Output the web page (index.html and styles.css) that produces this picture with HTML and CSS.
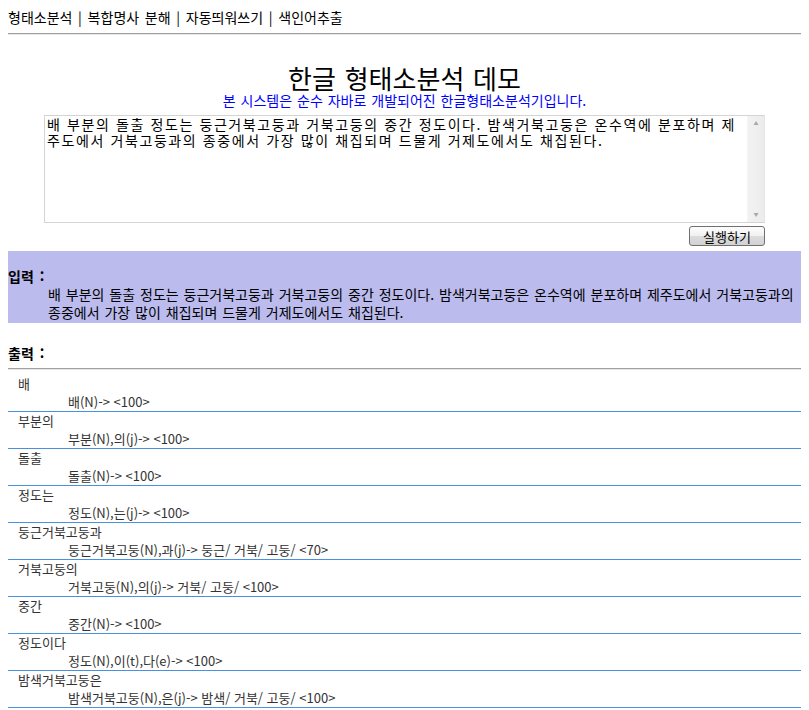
FILE: index.html
```html
<!DOCTYPE html>
<html lang="ko">
<head>
<meta charset="utf-8">
<title>한글 형태소분석 데모</title>
<link rel="stylesheet" href="styles.css">
</head>
<body>
<nav class="topnav">형태소분석 | 복합명사 분해 | 자동띄워쓰기 | 색인어추출</nav>
<hr class="rule">
<header class="head">
  <h1 class="title">한글 형태소분석 데모</h1>
  <p class="subtitle">본 시스템은 순수 자바로 개발되어진 한글형태소분석기입니다.</p>
</header>
<form class="form">
  <div class="editor">
    <textarea class="editor-text">배 부분의 돌출 정도는 둥근거북고둥과 거북고둥의 중간 정도이다. 밤색거북고둥은 온수역에 분포하며 제주도에서 거북고둥과의 종중에서 가장 많이 채집되며 드물게 거제도에서도 채집된다.</textarea>
    <div class="scrollbar"><span class="arrow">&#9650;</span><span class="arrow">&#9660;</span></div>
  </div>
  <div class="actions"><button type="button" class="run">실행하기</button></div>
</form>
<section class="input-box">
  <div class="label">입력 :</div>
  <p class="input-text">배 부분의 돌출 정도는 둥근거북고둥과 거북고둥의 중간 정도이다. 밤색거북고둥은 온수역에 분포하며 제주도에서 거북고둥과의 종중에서 가장 많이 채집되며 드물게 거제도에서도 채집된다.</p>
</section>
<section class="output">
  <div class="label">출력 :</div>
  <hr class="rule out-rule">
  <ul class="results">
    <li class="row"><div class="word">배</div><div class="analysis">배(N)-&gt; &lt;100&gt;</div></li>
    <li class="row"><div class="word">부분의</div><div class="analysis">부분(N),의(j)-&gt; &lt;100&gt;</div></li>
    <li class="row"><div class="word">돌출</div><div class="analysis">돌출(N)-&gt; &lt;100&gt;</div></li>
    <li class="row"><div class="word">정도는</div><div class="analysis">정도(N),는(j)-&gt; &lt;100&gt;</div></li>
    <li class="row"><div class="word">둥근거북고둥과</div><div class="analysis">둥근거북고둥(N),과(j)-&gt; 둥근/ 거북/ 고둥/ &lt;70&gt;</div></li>
    <li class="row"><div class="word">거북고둥의</div><div class="analysis">거북고둥(N),의(j)-&gt; 거북/ 고둥/ &lt;100&gt;</div></li>
    <li class="row"><div class="word">중간</div><div class="analysis">중간(N)-&gt; &lt;100&gt;</div></li>
    <li class="row"><div class="word">정도이다</div><div class="analysis">정도(N),이(t),다(e)-&gt; &lt;100&gt;</div></li>
    <li class="row"><div class="word">밤색거북고둥은</div><div class="analysis">밤색거북고둥(N),은(j)-&gt; 밤색/ 거북/ 고둥/ &lt;100&gt;</div></li>
  </ul>
</section>
</body>
</html>
```
FILE: styles.css
```css
html, body {
  background: #ffffff;
}
body {
  margin: 8px;
  font-family: "Noto Sans CJK KR", "Noto Sans", sans-serif;
  font-size: 14px;
  line-height: 18px;
  color: #000;
}
.topnav {
  height: 18px;
  line-height: 18px;
  word-spacing: 1.8px;
}
.rule {
  margin: 7px 0 0;
  height: 0;
  border: 0;
  border-top: 1px solid #a0a0a0;
  border-bottom: 1px solid #e6e6e6;
}
.head {
  text-align: center;
  margin-top: 29px;
}
.title {
  margin: 0;
  font-size: 26px;
  font-weight: normal;
  line-height: 28px;
  word-spacing: 1.5px;
}
.subtitle {
  margin: 0;
  color: #0000ff;
  font-size: 14px;
  line-height: 16px;
  word-spacing: 1px;
}
.form {
  width: 721px;
  margin: 7px auto 0;
}
.editor {
  display: flex;
  height: 108px;
  box-sizing: border-box;
  border: 1px solid #d4d4d4;
  border-right-color: #e4e4e4;
}
.editor-text {
  flex: 1;
  min-width: 0;
  border: 0;
  outline: none;
  resize: none;
  margin: 0;
  padding: 0 11px 0 2px;
  font-family: "Noto Sans CJK KR", "Noto Sans", sans-serif;
  font-size: 14px;
  line-height: 16px;
  letter-spacing: 1.6px;
  color: #000;
  background: #fff;
  overflow: hidden;
}
.scrollbar {
  width: 17px;
  flex: none;
  display: flex;
  flex-direction: column;
  justify-content: space-between;
  align-items: center;
  padding: 4px 0 5px;
  box-sizing: border-box;
  background: linear-gradient(to right, #f2f2f2, #ececec);
  border-left: 1px solid #f6f6f6;
}
.arrow {
  font-size: 5px;
  line-height: 6px;
  color: #a8a8a8;
}
.actions {
  display: flex;
  justify-content: flex-end;
  margin-top: 3px;
}
.run {
  width: 76px;
  height: 20px;
  box-sizing: border-box;
  padding: 0;
  margin: 0;
  border: 1px solid #707070;
  border-radius: 3px;
  background: linear-gradient(#fdfdfd, #f0f0f0 50%, #dcdcdc 51%, #d2d2d2);
  font-family: "Noto Sans CJK KR", "Noto Sans", sans-serif;
  font-size: 13px;
  line-height: 17px;
  color: #000;
}
.input-box {
  margin: 5px -1px 0 -1px;
  padding: 16px 0 2px;
  background: #bbbbee;
}
.label {
  font-weight: bold;
  line-height: 18px;
  word-spacing: 2px;
}
.input-box .label {
  padding-left: 1px;
}
.input-text {
  margin: 0;
  padding-left: 41px;
  padding-right: 4px;
  line-height: 18px;
  word-spacing: 1px;
  word-break: keep-all;
}
.output {
  margin-top: 21px;
}
.out-rule {
  margin-top: 6px;
}
.results {
  list-style: none;
  margin: 5px 0 0;
  padding: 0;
}
.row {
  border-bottom: 1px solid #4a90e2;
  font-size: 13px;
  color: #333;
}
.word {
  padding-left: 10px;
  line-height: 18px;
}
.analysis {
  padding-left: 60px;
  line-height: 18px;
}
```
